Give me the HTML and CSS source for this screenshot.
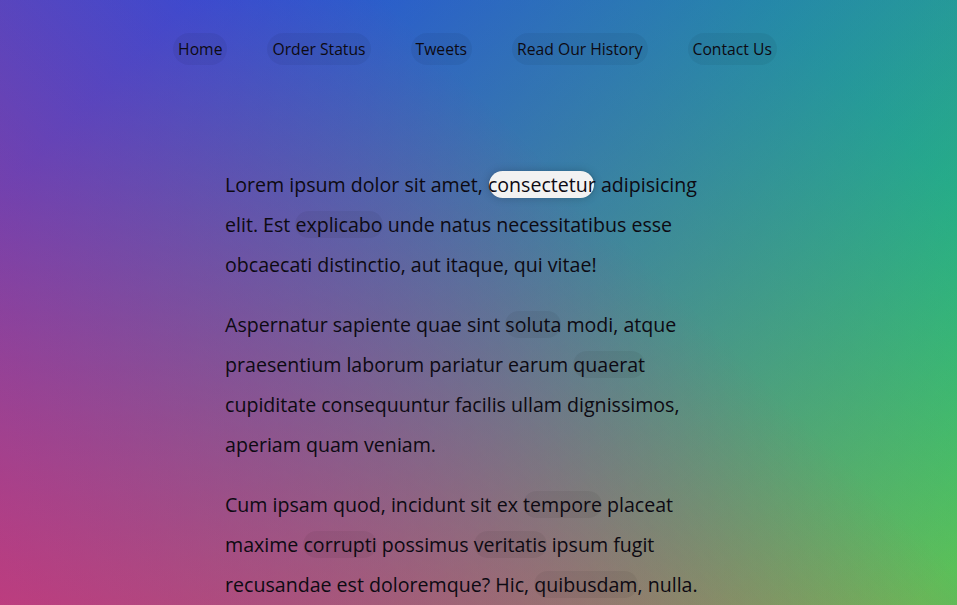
FILE: index.html
```html
<!DOCTYPE html>
<html lang="en">
<head>
<meta charset="UTF-8">
<title>Follow Along Nav</title>
<link rel="stylesheet" href="styles.css">
</head>
<body>
  <nav>
    <ul class="menu">
      <li><a href="#">Home</a></li>
      <li><a href="#">Order Status</a></li>
      <li><a href="#">Tweets</a></li>
      <li><a href="#">Read Our History</a></li>
      <li><a href="#">Contact Us</a></li>
    </ul>
  </nav>

  <div class="wrapper">
    <p>Lorem ipsum dolor sit amet, <a href="#" class="is-highlighted">consectetur</a> adipisicing elit. Est <a href="#">explicabo</a> unde natus necessitatibus esse obcaecati distinctio, aut itaque, qui vitae!</p>
    <p>Aspernatur sapiente quae sint <a href="#">soluta</a> modi, atque praesentium laborum pariatur earum <a href="#">quaerat</a> cupiditate consequuntur facilis ullam dignissimos, aperiam quam veniam.</p>
    <p>Cum ipsam quod, incidunt sit ex <a href="#">tempore</a> placeat maxime <a href="#">corrupti</a> possimus <a href="#">veritatis</a> ipsum fugit recusandae est doloremque? Hic, <a href="#">quibusdam</a>, nulla.</p>
    <p>Esse quibusdam, ad, ducimus cupiditate <a href="#">nulla</a>, quae magni odit <a href="#">totam</a> ut consequatur eveniet sunt quam provident sapiente dicta neque quod.</p>
    <p>Aliquam <a href="#">dicta</a> sequi culpa fugiat <a href="#">consequuntur</a> pariatur optio ad minima, maxime <a href="#">odio</a>, distinctio magni impedit tempore enim repellendus <a href="#">repudiandae</a> quas!</p>
  </div>
</body>
</html>
```

FILE: styles.css
```css
html {
  box-sizing: border-box;
}

*, *::before, *::after {
  box-sizing: inherit;
}

body {
  min-height: 100vh;
  margin: 0;
  padding-right: 7px;
  font-family: "Open Sans", "Noto Sans", sans-serif;
  color: #0d0a12;
  background:
    linear-gradient(rgba(120, 112, 140, 0.25), rgba(120, 112, 140, 0.25)),
    linear-gradient(45deg, hsla(340, 100%, 55%, 1) 0%, hsla(340, 100%, 55%, 0) 70%),
    linear-gradient(135deg, hsla(225, 95%, 50%, 1) 10%, hsla(225, 95%, 50%, 0) 80%),
    linear-gradient(225deg, hsla(140, 90%, 50%, 1) 10%, hsla(140, 90%, 50%, 0) 80%),
    linear-gradient(315deg, hsla(35, 95%, 55%, 1) 100%, hsla(35, 95%, 55%, 0) 70%);
}

.menu {
  display: flex;
  justify-content: center;
  list-style: none;
  padding: 0;
  margin: 33px 0 100px;
  font-size: 15.7px;
}

.menu a {
  display: inline-block;
  padding: 5px;
  margin: 0 20px;
}

.wrapper {
  position: relative;
  max-width: 500px;
  margin: 0 auto;
  font-size: 19.6px;
  line-height: 40px;
}

.wrapper p {
  margin: 20px 0;
}

a {
  text-decoration: none;
  color: #0d0a12;
  background: rgba(0, 0, 0, 0.05);
  border-radius: 20px;
}

.is-highlighted {
  position: relative;
}

.is-highlighted::before {
  content: "";
  position: absolute;
  top: 0;
  bottom: 0;
  left: 1px;
  right: 2px;
  z-index: -1;
  background: white;
  border-radius: 20px;
  box-shadow: 0 0 10px rgba(0, 0, 0, 0.2);
}
```
